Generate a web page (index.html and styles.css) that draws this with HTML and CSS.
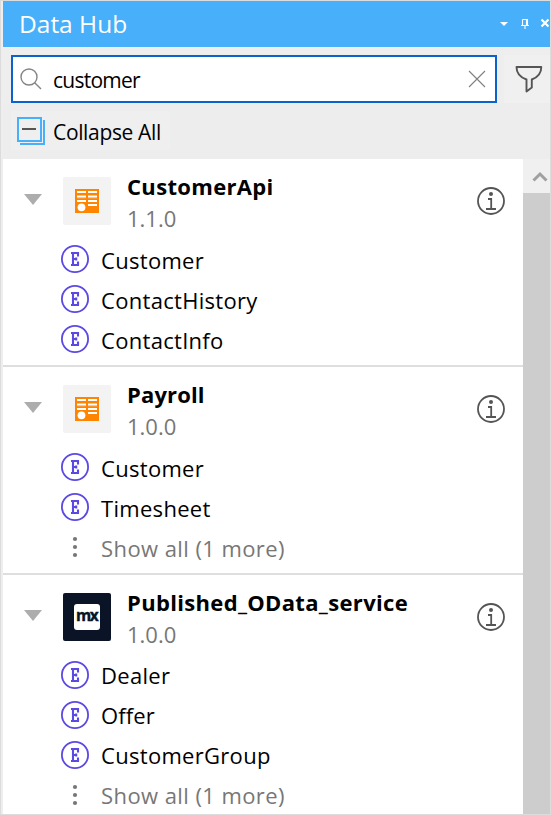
FILE: index.html
```html
<!DOCTYPE html>
<html lang="en">
<head>
<meta charset="utf-8">
<title>Data Hub</title>
<link rel="stylesheet" href="styles.css">
</head>
<body>
<svg class="defs" width="0" height="0">
  <symbol id="entity" viewBox="0 0 28 28"><circle cx="14" cy="14" r="13.1" fill="none" stroke="#5b49e3" stroke-width="1.8"/><path d="M10 8H17V11.5M10 20H17V16.5M12 8V20M12 14H16M15.2 12.4V15.6" fill="none" stroke="#5b49e3" stroke-width="2.1"/></symbol>
  <symbol id="info" viewBox="0 0 28 28"><circle cx="14" cy="14" r="13" fill="none" stroke="#555" stroke-width="1.8"/><circle cx="14" cy="7" r="2" fill="#555"/><path d="M11 12H14.2V22M9 22H19" fill="none" stroke="#555" stroke-width="1.8"/></symbol>
  <symbol id="service" viewBox="0 0 24 24"><path fill="#ff8500" d="M0 0H24V24H0Z"/><path fill="#fff" d="M2 2H11V4H2ZM13 2H22V4H13ZM2 6.5H11V8.5H2ZM13 6.5H22V8.5H13ZM2 11H11V13H2ZM13 11H22V13H13ZM13 15H22V17H13Z"/><path fill="#ffc98f" d="M2 8.5H11V9.3H2ZM13 8.5H22V9.3H13Z"/><circle cx="6.5" cy="18.3" r="4.8" fill="#ff8500"/><circle cx="6.5" cy="18.3" r="3.9" fill="#fff"/></symbol>
  <symbol id="dots" viewBox="0 0 28 28"><g fill="#777"><circle cx="14" cy="6" r="2.1"/><circle cx="14" cy="14" r="2.1"/><circle cx="14" cy="22" r="2.1"/></g></symbol>
</svg>
<div class="panel">
  <header class="titlebar">
    <h1>Data Hub</h1>
    <svg width="52" height="16" viewBox="0 0 52 16"><path fill="#fff" d="M2 6H10L6 10Z"/><path d="M24.5 3.5H29.5V9M24.5 3.5V9M28.5 3V9M23 9.5H31M27 10V13" fill="none" stroke="#fff" stroke-width="1.1"/><path d="M43.5 3.5L50.5 10.5M50.5 3.5L43.5 10.5" stroke="#fff" stroke-width="2.2"/></svg>
  </header>
  <div class="search-row">
    <div class="search">
      <svg class="lens" width="22" height="22" viewBox="0 0 22 22" fill="none" stroke="#858585" stroke-width="1.4"><circle cx="9" cy="9" r="8"/><path d="M14.7 14.7L21 21"/></svg>
      <span class="query">customer</span>
      <svg class="clear" width="18" height="18" viewBox="0 0 18 18" stroke="#808080" stroke-width="1.1"><path d="M1 1L17 17M17 1L1 17"/></svg>
    </div>
    <div class="filter"><svg width="28" height="28" viewBox="0 0 28 28" fill="none" stroke="#555" stroke-width="1.9" stroke-linejoin="round"><path d="M1.5 2H26.3C26.3 9 22 12.6 16.8 14.5V22.5L11.5 26.5V14.5C6 12.6 1.5 9 1.5 2Z"/></svg></div>
  </div>
  <div class="toolbar">
    <div class="collapse">
      <svg width="28" height="28" viewBox="0 0 28 28" fill="none" stroke="#48affa" stroke-width="2"><path d="M1 1H24V24H1Z"/><path d="M3 27H27V3"/><path d="M5 12H19" stroke="#555"/></svg>
      <span>Collapse All</span>
    </div>
  </div>
  <div class="content">
    <main class="list">
      <section class="group">
        <div class="head"><i class="arrow"></i><div class="logo"><svg width="24" height="24"><use href="#service"/></svg></div><div class="names"><h2>CustomerApi</h2><p>1.1.0</p></div><svg class="info" width="28" height="28"><use href="#info"/></svg></div>
        <div class="row"><svg width="28" height="28"><use href="#entity"/></svg><span>Customer</span></div>
        <div class="row"><svg width="28" height="28"><use href="#entity"/></svg><span>ContactHistory</span></div>
        <div class="row"><svg width="28" height="28"><use href="#entity"/></svg><span>ContactInfo</span></div>
      </section>
      <section class="group">
        <div class="head"><i class="arrow"></i><div class="logo"><svg width="24" height="24"><use href="#service"/></svg></div><div class="names"><h2 class="tight">Payroll</h2><p>1.0.0</p></div><svg class="info" width="28" height="28"><use href="#info"/></svg></div>
        <div class="row"><svg width="28" height="28"><use href="#entity"/></svg><span>Customer</span></div>
        <div class="row"><svg width="28" height="28"><use href="#entity"/></svg><span>Timesheet</span></div>
        <div class="row more"><svg width="28" height="28"><use href="#dots"/></svg><span>Show all (1 more)</span></div>
      </section>
      <section class="group">
        <div class="head"><i class="arrow"></i><div class="logo dark"><b>mx</b></div><div class="names"><h2>Published_OData_service</h2><p>1.0.0</p></div><svg class="info" width="28" height="28"><use href="#info"/></svg></div>
        <div class="row"><svg width="28" height="28"><use href="#entity"/></svg><span>Dealer</span></div>
        <div class="row"><svg width="28" height="28"><use href="#entity"/></svg><span class="tight">Offer</span></div>
        <div class="row"><svg width="28" height="28"><use href="#entity"/></svg><span>CustomerGroup</span></div>
        <div class="row more"><svg width="28" height="28"><use href="#dots"/></svg><span>Show all (1 more)</span></div>
      </section>
    </main>
    <div class="scrollbar"><div class="up"><svg width="16" height="12" viewBox="0 0 16 12"><path d="M1.5 9.5L8 3L14.5 9.5" fill="none" stroke="#a0a0a0" stroke-width="3"/></svg></div></div>
  </div>
</div>
</body>
</html>
```
FILE: styles.css
```css
* { box-sizing: border-box; }
body { margin: 0; font-family: "Open Sans", "Noto Sans", sans-serif; color: #000; overflow: hidden; }
h1, h2, p { margin: 0; }
svg { display: block; flex: none; }
.defs { position: absolute; }
.panel { width: 551px; height: 815px; border: 1px solid #dcdcdc; padding-left: 2px; background: #eeeeee; display: flex; flex-direction: column; }
.titlebar { height: 46px; flex: none; background: #48affa; display: flex; align-items: center; justify-content: space-between; padding-left: 16px; }
.titlebar h1 { color: #fff; font-size: 24.5px; font-weight: 400; line-height: 46px; }
.search-row { height: 56px; flex: none; padding: 8px 0 0 8px; display: flex; gap: 7px; }
.search { width: 486px; height: 48px; border: 2px solid #0c62cc; background: #fff; display: flex; align-items: center; padding: 0 9px 0 7px; }
.query { flex: 1; margin-left: 11px; font-size: 21px; padding-top: 1px; line-height: 30px; letter-spacing: -0.75px; }
.lens { margin-top: -1px; }
.filter { flex: 1; padding: 10px 0 0 11px; background: #f0f0f0; }
.toolbar { height: 56px; flex: none; padding: 8px; background: #ededed; }
.collapse { width: 159px; height: 39px; background: #efefef; display: flex; align-items: center; padding-left: 6px; gap: 8px; font-size: 21px; letter-spacing: -0.35px; white-space: nowrap; }
.collapse span { padding-top: 3px; }
.content { flex: 1; min-height: 0; display: flex; }
.list { width: 520px; background: #fff; overflow: hidden; }
.group { height: 208px; border-bottom: 2px solid #dedede; }
.group:last-child { height: auto; border: 0; }
.head { height: 80px; padding: 18px 18px 0 21px; display: flex; align-items: flex-start; }
.arrow { width: 18px; height: 11px; margin-top: 17px; background: #adadad; clip-path: polygon(0 0, 100% 0, 50% 100%); }
.logo { width: 48px; height: 48px; margin-left: 21px; border-radius: 2px; background: #f3f3f3; display: grid; place-items: center; }
.dark { background: #0b1326; }
.dark b { width: 26px; height: 26px; border-radius: 3px; background: #fff; color: #0b1326; font-size: 15.5px; line-height: 22px; text-align: center; letter-spacing: -1.5px; padding-right: 1px; -webkit-text-stroke: 0.4px #0b1326; }
.names { flex: 1; margin-left: 16px; margin-top: -7px; white-space: nowrap; }
.names h2 { font-size: 22px; font-weight: 700; line-height: 32px; letter-spacing: 0.33px; }
.names h2.tight { letter-spacing: 0.15px; }
.names p { font-size: 22px; line-height: 32px; color: #777; }
.info { margin-top: 10px; }
.row { height: 40px; padding: 6px 0 0 58px; display: flex; gap: 12px; font-size: 22px; line-height: 30px; letter-spacing: 0.3px; white-space: nowrap; }
.row .tight { letter-spacing: 0.1px; }
.group:last-child .row { line-height: 28px; }
.more { color: #777; letter-spacing: 0.42px; }
.scrollbar { flex: 1; background: #cdcdcd; }
.up { height: 34px; background: #f0f0f0; padding: 12px 0 0 9px; }
```
